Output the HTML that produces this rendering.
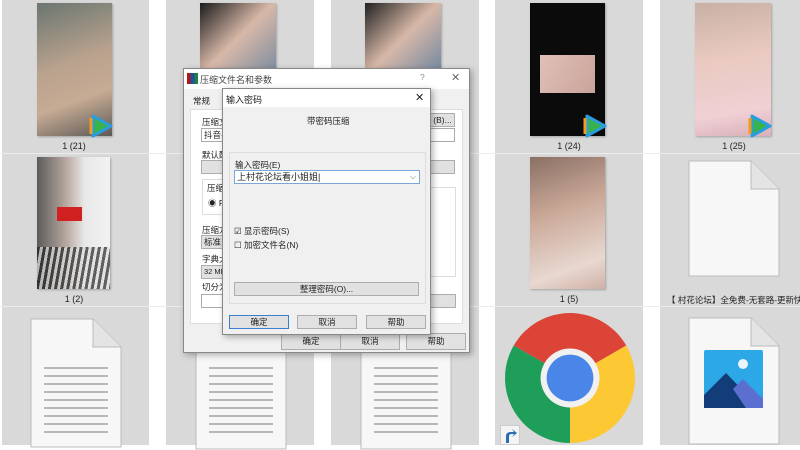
<!DOCTYPE html>
<html><head><meta charset="utf-8"><style>
*{margin:0;padding:0;box-sizing:border-box}
body{width:800px;height:445px;overflow:hidden;background:#fff;position:relative;font-family:"Liberation Sans","Noto Sans CJK SC",sans-serif;font-size:9px;color:#222}
.col{position:absolute;top:0;height:445px;background:#d9d9d9}
.sep{position:absolute;height:1px;background:#ececec}
.ph{position:absolute;box-shadow:1px 1px 2px rgba(0,0,0,.25)}
.lbl{position:absolute;width:148px;text-align:center;font-size:9px;color:#222}
.doc{position:absolute}
.dlg{position:absolute;background:#f0f0f0;border:1px solid #888;box-shadow:2px 2px 6px rgba(0,0,0,.3)}
.btn{position:absolute;height:14px;background:#e1e1e1;border:1px solid #adadad;text-align:center;font-size:8.5px;line-height:12px}
.inp{position:absolute;background:#fff;border:1px solid #aaa;height:14px}
.t{position:absolute;font-size:8.5px;white-space:nowrap}
</style></head><body>
<div class="col" style="left:2px;width:147px"></div>
<div class="col" style="left:166px;width:148px"></div>
<div class="col" style="left:331px;width:148px"></div>
<div class="col" style="left:495px;width:148px"></div>
<div class="col" style="left:660px;width:140px"></div>
<div class="sep" style="left:0;top:153px;width:800px"></div>
<div class="sep" style="left:0;top:306px;width:800px"></div>
<!-- row1 photos -->
<div class="ph" style="left:37px;top:3px;width:75px;height:133px;background:linear-gradient(160deg,#6a7670,#b9a28e 45%,#c7ab94 70%,#5c5a55)"></div>
<svg style="position:absolute;left:88px;top:113px" width="26" height="26" viewBox="0 0 26 26"><path d="M5 3 L23 13 L5 23 Z" fill="#36b34a" stroke="#2a9de0" stroke-width="3" stroke-linejoin="round"/><path d="M3 5v16" stroke="#f39c1a" stroke-width="3"/></svg>
<div class="lbl" style="left:0;top:141px">1 (21)</div>
<div class="ph" style="left:200px;top:3px;width:76px;height:70px;background:linear-gradient(135deg,#1c1c1c,#d8b8a8 50%,#7a8ca0)"></div>
<div class="ph" style="left:365px;top:3px;width:76px;height:70px;background:linear-gradient(135deg,#222,#d8b8a8 50%,#6f87a0)"></div>
<div class="ph" style="left:530px;top:3px;width:75px;height:133px;background:#0b0b0b"><div style="position:absolute;left:10px;top:52px;width:55px;height:38px;background:linear-gradient(120deg,#e0c0b8,#c9a49a)"></div></div>
<svg style="position:absolute;left:582px;top:113px" width="26" height="26" viewBox="0 0 26 26"><path d="M5 3 L23 13 L5 23 Z" fill="#36b34a" stroke="#2a9de0" stroke-width="3" stroke-linejoin="round"/><path d="M3 5v16" stroke="#f39c1a" stroke-width="3"/></svg>
<div class="lbl" style="left:495px;top:141px">1 (24)</div>
<div class="ph" style="left:695px;top:3px;width:76px;height:133px;background:linear-gradient(170deg,#c8b0a4,#e9c9bf 40%,#f0d0d4 80%,#d8b0b8)"></div>
<svg style="position:absolute;left:747px;top:113px" width="26" height="26" viewBox="0 0 26 26"><path d="M5 3 L23 13 L5 23 Z" fill="#36b34a" stroke="#2a9de0" stroke-width="3" stroke-linejoin="round"/><path d="M3 5v16" stroke="#f39c1a" stroke-width="3"/></svg>
<div class="lbl" style="left:660px;top:141px">1 (25)</div>
<!-- row2 -->
<div class="ph" style="left:37px;top:157px;width:73px;height:132px;background:linear-gradient(90deg,#5b5b5b,#b8a8a0 40%,#e8e8e8 65%,#f2f2f2)"><div style="position:absolute;left:20px;top:50px;width:25px;height:14px;background:#d02020"></div><div style="position:absolute;left:0;top:90px;width:73px;height:42px;background:repeating-linear-gradient(100deg,#222 0 3px,#ddd 3px 6px);opacity:.7"></div></div>
<div class="lbl" style="left:0;top:294px">1 (2)</div>
<div class="ph" style="left:530px;top:157px;width:75px;height:132px;background:linear-gradient(160deg,#8a7064,#caa898 40%,#e8d8d0 80%,#cfb0a6)"></div>
<div class="lbl" style="left:495px;top:294px">1 (5)</div>
<svg class="doc" style="left:688px;top:160px" width="92" height="117" viewBox="0 0 92 117"><path d="M1 1H63L91 29V116H1Z" fill="#f7f7f7" stroke="#bbb"/><path d="M63 1V29H91" fill="#e4e4e4" stroke="#bbb"/></svg>
<div class="t" style="left:667px;top:294px">【 村花论坛】全免费-无套路-更新快</div>
<!-- row3 docs -->
<svg class="doc" style="left:30px;top:318px" width="92" height="130" viewBox="0 0 92 130"><path d="M1 1H63L91 29V129H1Z" fill="#f7f7f7" stroke="#bbb"/><path d="M63 1V29H91" fill="#e4e4e4" stroke="#bbb"/><g stroke="#777" stroke-width="1"><path d="M14 50H78M14 58H78M14 66H78M14 74H78M14 82H78M14 90H78M14 98H78M14 106H78M14 114H78"/></g></svg>
<svg class="doc" style="left:195px;top:340px" width="92" height="110" viewBox="0 0 92 110"><path d="M1 1H91V109H1Z" fill="#f7f7f7" stroke="#bbb"/><g stroke="#777"><path d="M14 28H78M14 36H78M14 44H78M14 52H78M14 60H78M14 68H78M14 76H78M14 84H78M14 92H78"/></g></svg>
<svg class="doc" style="left:360px;top:340px" width="92" height="110" viewBox="0 0 92 110"><path d="M1 1H91V109H1Z" fill="#f7f7f7" stroke="#bbb"/><g stroke="#777"><path d="M14 28H78M14 36H78M14 44H78M14 52H78M14 60H78M14 68H78M14 76H78M14 84H78M14 92H78"/></g></svg>
<!-- chrome -->
<svg style="position:absolute;left:505px;top:313px" width="130" height="130" viewBox="-64 -64 128 128">
<path d="M0 0 L-55.4 -32 A64 64 0 0 1 55.4 -32 Z" fill="#db4437"/>
<path d="M0 0 L55.4 -32 A64 64 0 0 1 0 64 Z" fill="#fcc934"/>
<path d="M0 0 L0 64 A64 64 0 0 1 -55.4 -32 Z" fill="#1e9e58"/>
<circle r="29" fill="#f1f1f1"/><circle r="23" fill="#4a86e8"/></svg>
<div style="position:absolute;left:500px;top:425px;width:20px;height:20px;background:#f4f4f4;border:1px solid #ccc"><svg width="18" height="18" viewBox="0 0 18 18"><path d="M5 17V10Q5 6 10 6H13L11 3L16 7L11 11L13 8H10Q8 8 8 11V17Z" fill="#2b6cb0"/></svg></div>
<svg class="doc" style="left:688px;top:317px" width="92" height="128" viewBox="0 0 92 128"><path d="M1 1H63L91 29V127H1Z" fill="#f7f7f7" stroke="#bbb"/><path d="M63 1V29H91" fill="#e4e4e4" stroke="#bbb"/><rect x="16" y="33" width="59" height="58" rx="2" fill="#2da8e6"/><circle cx="55" cy="47" r="5" fill="#eaf4fb"/><path d="M16 78L38 56L72 91H16Z" fill="#123d78"/><path d="M45 72L55 62L75 82V91H58Z" fill="#5b6fd0"/></svg>
<!-- back dialog -->
<div class="dlg" style="left:183px;top:68px;width:287px;height:285px;background:#f0f0f0">
<div style="height:20px;background:#fff;position:relative"><div style="position:absolute;left:3px;top:4px;width:11px;height:11px;background:linear-gradient(90deg,#b01818 33%,#2050a0 33% 66%,#208040 66%)"></div><div class="t" style="left:16px;top:4px;color:#444;font-size:9px">压缩文件名和参数</div><div class="t" style="left:236px;top:3px;color:#888">?</div><div class="t" style="left:267px;top:2px;color:#666;font-size:11px">✕</div></div>
<div class="t" style="left:9px;top:26px">常规</div>
<div style="position:absolute;left:6px;top:40px;width:273px;height:215px;background:#fff;border:1px solid #ddd"></div>
<div class="t" style="left:18px;top:47px">压缩文</div>
<div class="inp" style="left:17px;top:59px;width:40px;font-size:8.5px;padding-left:2px;line-height:12px">抖音-</div>
<div class="btn" style="left:246px;top:44px;width:25px">(B)...</div>
<div class="inp" style="left:246px;top:59px;width:25px"></div>
<div class="t" style="left:18px;top:80px">默认配</div>
<div class="btn" style="left:17px;top:91px;width:40px"></div>
<div class="btn" style="left:246px;top:91px;width:25px"></div>
<div style="position:absolute;left:18px;top:110px;width:40px;height:36px;border:1px solid #ddd"></div>
<div class="t" style="left:23px;top:113px">压缩</div>
<div class="t" style="left:24px;top:128px">◉ RA</div>
<div style="position:absolute;left:246px;top:118px;width:26px;height:90px;border:1px solid #ddd"></div>
<div class="t" style="left:18px;top:155px">压缩方</div>
<div class="btn" style="left:17px;top:166px;width:40px;text-align:left;padding-left:2px">标准</div>
<div class="t" style="left:18px;top:184px">字典大</div>
<div class="btn" style="left:17px;top:196px;width:40px;text-align:left;padding-left:2px;font-size:7.5px">32 MB</div>
<div class="t" style="left:18px;top:212px">切分为</div>
<div class="inp" style="left:17px;top:225px;width:40px"></div>
<div class="btn" style="left:246px;top:225px;width:26px"></div>
<div class="btn" style="left:97px;top:264px;width:60px;height:17px;line-height:15px">确定</div>
<div class="btn" style="left:156px;top:264px;width:60px;height:17px;line-height:15px">取消</div>
<div class="btn" style="left:222px;top:264px;width:60px;height:17px;line-height:15px">帮助</div>
</div>
<!-- front dialog -->
<div class="dlg" style="left:222px;top:88px;width:209px;height:247px">
<div style="height:18px;background:#fff;position:relative"><div class="t" style="left:3px;top:4px;font-size:9px">输入密码</div><div class="t" style="left:192px;top:2px;font-size:11px">✕</div></div>
<div class="t" style="left:84px;top:26px">带密码压缩</div>
<div style="position:absolute;left:6px;top:63px;width:197px;height:152px;border:1px solid #ddd"></div>
<div class="t" style="left:12px;top:70px">输入密码(E)</div>
<div class="inp" style="left:11px;top:81px;width:186px;border-color:#7aa7d8;padding-left:2px;line-height:12px;font-size:9px">上村花论坛看小姐姐|<span style="position:absolute;right:3px;top:0;color:#666;font-size:8px">⌵</span></div>
<div class="t" style="left:11px;top:136px">☑ 显示密码(S)</div>
<div class="t" style="left:11px;top:150px">☐ 加密文件名(N)</div>
<div class="btn" style="left:11px;top:193px;width:185px">整理密码(O)...</div>
<div class="btn" style="left:6px;top:226px;width:60px;border-color:#3c7fd0">确定</div>
<div class="btn" style="left:74px;top:226px;width:60px">取消</div>
<div class="btn" style="left:143px;top:226px;width:60px">帮助</div>
</div>
</body></html>
